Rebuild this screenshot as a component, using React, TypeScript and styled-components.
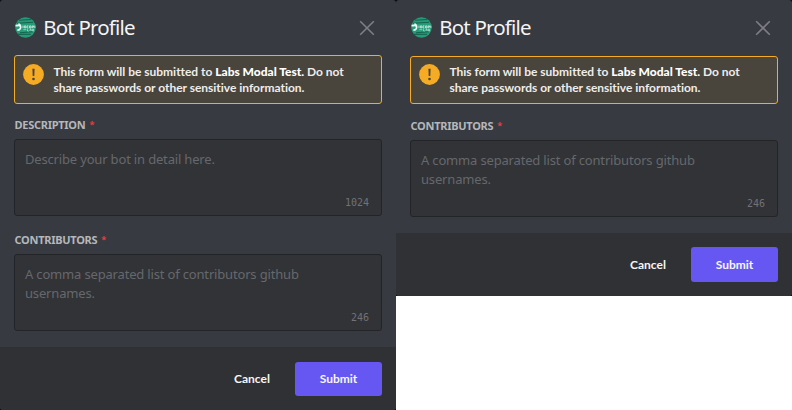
import React from 'react';
import styled, { createGlobalStyle } from 'styled-components';

const GlobalStyle = createGlobalStyle`
  * { box-sizing: border-box; }
  body { margin: 0; background: #fff; }
`;

const Page = styled.main`
  display: flex;
  align-items: flex-start;
  width: 792px;
  height: 410px;
  overflow: hidden;
`;

const Backdrop = styled.div`
  width: 396px;
  background: #0b0b0d;
`;

const Modal = styled.section<{ $height: number }>`
  display: flex;
  flex-direction: column;
  height: ${(p) => p.$height}px;
  border-radius: 3px;
  overflow: hidden;
  background: #373a41;
`;

const Header = styled.header<{ $height: number }>`
  display: flex;
  flex: none;
  align-items: flex-start;
  height: ${(p) => p.$height}px;
  padding: 17px 21px 0 14.5px;
`;

const Title = styled.h1`
  flex: 1;
  margin: -2px 0 0 7.8px;
  font: 400 20.5px/24px 'Noto Sans', sans-serif;
  letter-spacing: -0.83px;
  color: #f4f4f5;
`;

const CloseButton = styled.button`
  display: flex;
  margin: 3px 0 0;
  padding: 0;
  border: 0;
  background: none;
  color: #7d7f84;
`;

const Body = styled.div`
  display: flex;
  flex: 1;
  flex-direction: column;
  padding: 0 14px;
`;

const Notice = styled.div<{ $height: number }>`
  display: flex;
  flex: none;
  align-items: flex-end;
  height: ${(p) => p.$height}px;
  padding: 0 8px 7px;
  border: 1px solid #f6ab24;
  border-radius: 3px;
  background: #49443c;
`;

const NoticeIcon = styled.svg`
  flex: none;
  margin-bottom: 11px;
`;

const NoticeText = styled.p`
  margin: 0 0 0 9.5px;
  font: 700 12px/16px Lato, sans-serif;
  letter-spacing: -0.015px;
  color: #eeedeb;
  white-space: nowrap;
`;

const AppName = styled.strong`
  font-weight: 900;
  color: #fff;
`;

const Fields = styled.div<{ $top: number }>`
  padding-top: ${(p) => p.$top}px;
`;

const Field = styled.div`
  display: flex;
  flex-direction: column;
  height: 115px;
  padding-top: 13px;
`;

const Label = styled.label`
  height: 22px;
  padding-left: 0.5px;
  font: 700 11px/15px 'Noto Sans', sans-serif;
  letter-spacing: -0.27px;
  color: #b5b7ba;
  white-space: nowrap;
`;

const Required = styled.span`
  margin-left: 4px;
  font-size: 9px;
  vertical-align: 1px;
  line-height: 1;
  color: #e93d42;
`;

const InputBox = styled.div`
  display: flex;
  flex: none;
  flex-direction: column;
  justify-content: space-between;
  height: 77px;
  padding: 10px 12px 6px 10px;
  border: 1px solid #232428;
  border-radius: 3px;
  background: #323337;
`;

const Placeholder = styled.div`
  font: 400 13px/19px 'Noto Sans', sans-serif;
  letter-spacing: -0.17px;
  color: #65686c;
  white-space: nowrap;
`;

const Counter = styled.div`
  align-self: flex-end;
  font: 400 10px/12px 'DejaVu Sans Mono', monospace;
  color: #707277;
`;

const Footer = styled.footer<{ $top: number }>`
  display: flex;
  flex: none;
  align-items: stretch;
  justify-content: flex-end;
  height: 63px;
  padding: ${(p) => p.$top}px 14px 14px 0;
  background: #303135;
`;

const Button = styled.button<{ $primary?: boolean }>`
  width: ${(p) => (p.$primary ? 87 : 86)}px;
  padding: 0;
  border: 0;
  border-radius: 3px;
  background: ${(p) => (p.$primary ? '#6656f2' : 'transparent')};
  color: #f6f6f7;
  font: 700 12px/16px Lato, sans-serif;
`;

function Logo() {
  return (
    <svg width="21" height="21" viewBox="0 0 21 21">
      <circle cx="10.5" cy="10.5" r="10.3" fill="#259b78" />
      <path
        d="M4 3.2 16 2.5M2 6.2 18 5.2M5 15.7 18 14.8M3 17.4 16 17.2"
        stroke="#14644f"
        strokeWidth="1.1"
      />
      <path d="M.5 7.8 3.4 7.4V6.3C7.2 6.2 8.2 14.2 2.4 14.1V12.2C5.6 12.2 5.4 9 3.1 9.4L.5 9.6Z" fill="#f3f8f6" />
      <path
        d="M8 8.6v2.4M9.4 8.9h1.4v2H9.4zM12 8.9h1.4M12 8.9v2.1h1.4M14.6 8.9H16V11h-1.4zM17.2 11.2V8.9h1.4v1.2h-1.4M19.8 8.6v2.4"
        fill="none"
        stroke="#dceee8"
        strokeWidth=".8"
      />
      <path
        d="M8.3 12.7h3M12.5 12.2v1.8h1.4M15 14v-1.6h1.2V14M17.4 12.2V14h1.2v-1.8z"
        fill="none"
        stroke="#bfe0d6"
        strokeWidth=".7"
      />
    </svg>
  );
}

function WarningIcon() {
  return (
    <NoticeIcon width="21" height="21" viewBox="0 0 21 21">
      <circle cx="10.5" cy="10.5" r="10.4" fill="#f6ab24" />
      <path d="M9.4 4.8h2.2l-.3 7.2H9.7z" fill="#49443c" />
      <circle cx="10.5" cy="15" r="1.3" fill="#49443c" />
    </NoticeIcon>
  );
}

type FieldData = { label: string; lines: string[]; limit: number };

const description: FieldData = {
  label: 'DESCRIPTION',
  lines: ['Describe your bot in detail here.'],
  limit: 1024,
};
const contributors: FieldData = {
  label: 'CONTRIBUTORS',
  lines: ['A comma separated list of contributors github', 'usernames.'],
  limit: 246,
};

type ModalProps = {
  height: number;
  headerHeight: number;
  noticeHeight: number;
  footerTop: number;
  fields: FieldData[];
};

function ProfileModal({ height, headerHeight, noticeHeight, footerTop, fields }: ModalProps) {
  return (
    <Backdrop>
      <Modal $height={height}>
        <Header $height={headerHeight}>
          <Logo />
          <Title>Bot Profile</Title>
          <CloseButton aria-label="Close">
            <svg width="16" height="16" viewBox="0 0 16 16" stroke="currentColor" strokeWidth="1.6">
              <path d="M1.2 1.2 14.8 14.8M14.8 1.2 1.2 14.8" />
            </svg>
          </CloseButton>
        </Header>
        <Body>
          <Notice $height={noticeHeight}>
            <WarningIcon />
            <NoticeText>
              This form will be submitted to <AppName>Labs Modal Test.</AppName> Do not
              <br />
              share passwords or other sensitive information.
            </NoticeText>
          </Notice>
          <Fields $top={fields.length > 1 ? 0 : 1}>
            {fields.map((field) => (
              <Field key={field.label}>
                <Label>
                  {field.label}
                  <Required>*</Required>
                </Label>
                <InputBox>
                  <Placeholder>
                    {field.lines.map((line) => (
                      <div key={line}>{line}</div>
                    ))}
                  </Placeholder>
                  <Counter>{field.limit}</Counter>
                </InputBox>
              </Field>
            ))}
          </Fields>
        </Body>
        <Footer $top={footerTop}>
          <Button>Cancel</Button>
          <Button $primary>Submit</Button>
        </Footer>
      </Modal>
    </Backdrop>
  );
}

export default function App() {
  return (
    <Page>
      <GlobalStyle />
      <ProfileModal
        height={410}
        headerHeight={55}
        noticeHeight={49}
        footerTop={15}
        fields={[description, contributors]}
      />
      <ProfileModal height={296} headerHeight={56} noticeHeight={48} footerTop={14} fields={[contributors]} />
    </Page>
  );
}
